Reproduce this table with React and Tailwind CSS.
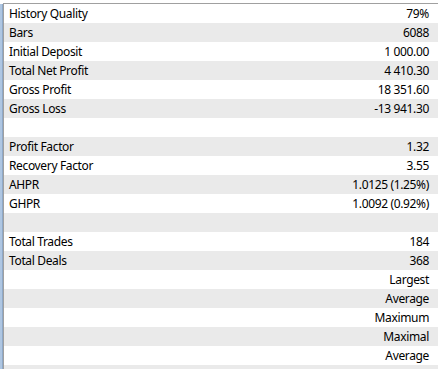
const ROWS = [
  ['History Quality', '79%'],
  ['Bars', '6088'],
  ['Initial Deposit', '1 000.00'],
  ['Total Net Profit', '4 410.30'],
  ['Gross Profit', '18 351.60'],
  ['Gross Loss', '-13 941.30'],
  ['', ''],
  ['Profit Factor', '1.32'],
  ['Recovery Factor', '3.55'],
  ['AHPR', '1.0125 (1.25%)'],
  ['GHPR', '1.0092 (0.92%)'],
  ['', ''],
  ['Total Trades', '184'],
  ['Total Deals', '368'],
  ['', 'Largest'],
  ['', 'Average'],
  ['', 'Maximum'],
  ['', 'Maximal'],
  ['', 'Average'],
  ['', ''],
]

export default function App() {
  return (
    <div className="w-[438px] h-[369px] overflow-hidden bg-white flex" style={{ fontFamily: '"Noto Sans", sans-serif' }}>
      <div className="w-[3px] flex flex-col shrink-0">
        <div className="h-[4px] bg-white" />
        <div className="flex-1 bg-[#aec6e2] border-r border-[#8fa9c8]" />
      </div>
      <div className="flex-1 flex flex-col pt-[3px]">
        <div className="flex-1 border-t border-l border-[#a0a0a0]">
          {ROWS.map(([label, value], i) => (
            <div
              key={i}
              className={`h-[19px] flex items-center justify-between pl-[5px] pr-[9px] text-[12px] tracking-[-0.35px] leading-none text-black ${i % 2 ? 'bg-[#eaeaea]' : 'bg-white'}`}
            >
              <span>{label}</span>
              <span>{value}</span>
            </div>
          ))}
        </div>
      </div>
    </div>
  )
}
